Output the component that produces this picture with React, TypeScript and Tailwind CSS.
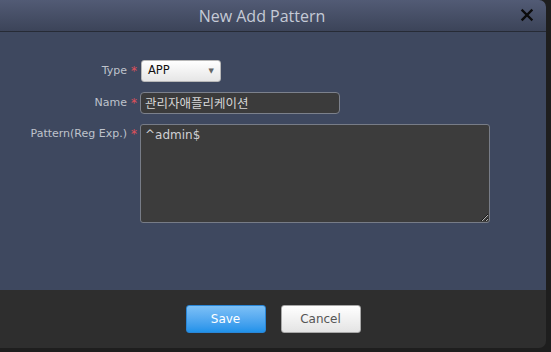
import React from 'react';

const labelFont = { fontFamily: '"DejaVu Sans", Verdana, sans-serif' };

const Label = ({ text }: { text: string }) => (
  <div className="flex justify-end items-center gap-[4px] pr-[3px] text-[11px] text-[#bfc3cc]" style={labelFont}>
    <span>{text}</span>
    <span className="text-[#e0505a] text-[12px] leading-none">*</span>
  </div>
);

export default function App() {
  return (
    <div className="w-[551px] h-[352px] bg-[#1e1e1e] overflow-hidden">
      <div className="w-[546px] h-[348px] flex flex-col rounded-tr-[7px] rounded-br-[7px] overflow-hidden">
        {/* Header */}
        <header className="relative h-[32px] flex-shrink-0 flex items-center justify-center pr-[22px] bg-gradient-to-b from-[#525b75] to-[#3c4459] border-b border-[#262b36]">
          <h2 className="text-[16px] text-[#c5cad6]" style={{ fontFamily: '"Open Sans", "DejaVu Sans", sans-serif' }}>
            New Add Pattern
          </h2>
          <button className="absolute right-[12px] top-[8px] w-[14px] h-[14px]" aria-label="Close">
            <svg viewBox="0 0 14 14" className="w-[14px] h-[14px]">
              <path d="M2.5 2.5 L11.5 11.5 M11.5 2.5 L2.5 11.5" stroke="#0c0c0c" strokeWidth="2.4" strokeLinecap="square" />
            </svg>
          </button>
        </header>

        {/* Body */}
        <div className="flex-1 bg-[#3e485f] pt-[28px]">
          <div className="grid grid-cols-[140px_1fr] gap-y-[10px]">
            <Label text="Type" />
            <div className="pl-[1px]">
              <div className="w-[80px] h-[22px] flex items-center justify-between px-[6px] rounded-[3px] border border-[#b8b8b8] bg-gradient-to-b from-[#ffffff] to-[#e6e6e6] text-[11.5px] text-[#111]" style={labelFont}>
                <span>APP</span>
                <span className="text-[7px] text-[#666]">▼</span>
              </div>
            </div>

            <Label text="Name" />
            <div>
              <div className="w-[200px] h-[22px] flex items-center px-[4px] rounded-[4px] border border-[#7c818c] bg-[#3b3b3b] text-[12.5px] text-[#d6d6d6]" style={{ fontFamily: '"Noto Sans CJK KR", sans-serif' }}>
                관리자애플리케이션
              </div>
            </div>

            <div className="flex items-start pt-[2px]">
              <div className="w-full">
                <Label text="Pattern(Reg Exp.)" />
              </div>
            </div>
            <div>
              <textarea
                defaultValue="^admin$"
                className="block w-[350px] h-[99px] px-[4px] py-[1px] rounded-[3px] border border-[#777c87] bg-[#3c3c3c] text-[12px] text-[#cfd0d4] outline-none"
                style={labelFont}
              />
            </div>
          </div>
        </div>

        {/* Footer */}
        <footer className="h-[58px] flex-shrink-0 bg-[#2e2e2e] flex items-center justify-center gap-[15px]">
          <button className="w-[80px] h-[28px] rounded-[3px] border border-[#2a86d6] bg-gradient-to-b from-[#7cc0f6] to-[#1f92ea] text-white text-[12px]" style={labelFont}>
            Save
          </button>
          <button className="w-[80px] h-[28px] rounded-[3px] border border-[#a8a8a8] bg-gradient-to-b from-[#ffffff] to-[#e4e4e4] text-[#555] text-[12px]" style={labelFont}>
            Cancel
          </button>
        </footer>
      </div>
    </div>
  );
}
